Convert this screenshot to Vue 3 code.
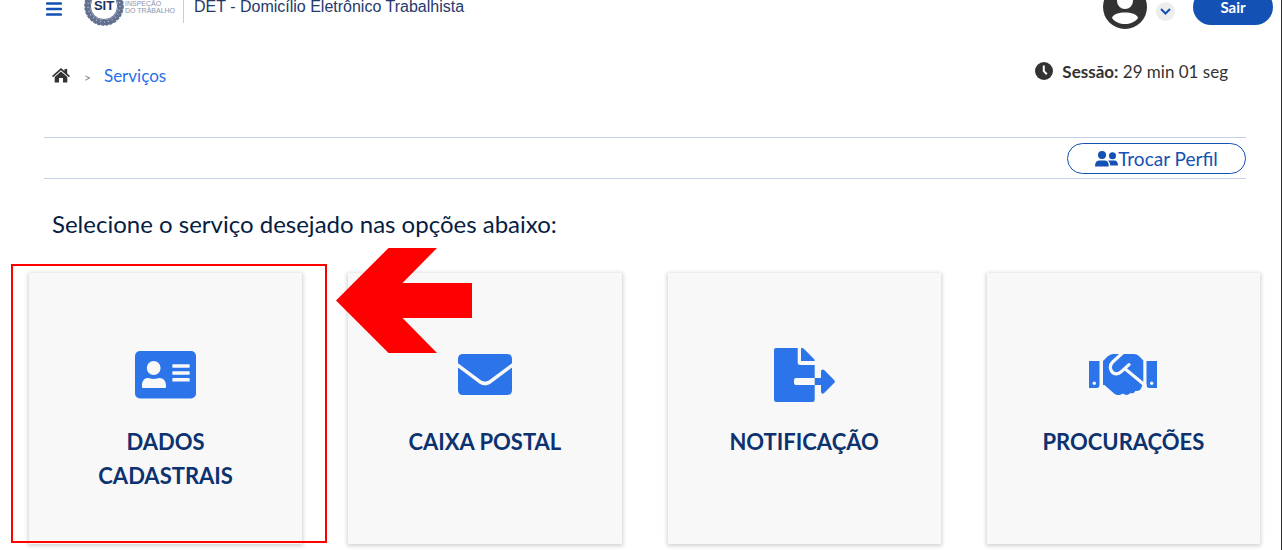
<script setup>
const services = [
  { id: 'dados', title: 'Dados Cadastrais', highlighted: true },
  { id: 'caixa', title: 'Caixa Postal' },
  { id: 'notificacao', title: 'Notificação' },
  { id: 'procuracoes', title: 'Procurações' },
]
</script>

<template>
  <div class="page">
    <header class="topbar">
      <button class="menu" type="button" aria-label="Menu">
        <svg width="16" height="14" viewBox="0 0 16 14">
          <path d="M1 1.500h14M1 7h14M1 12.500h14" stroke="#1351b4" stroke-width="2.500" stroke-linecap="round" />
        </svg>
      </button>
      <a class="brand" href="#">
        <svg class="seal" width="40" height="40" viewBox="0 0 40 40">
          <circle cx="20" cy="20" r="16.500" fill="none" stroke="#62718f" stroke-width="5" />
          <circle cx="20" cy="20" r="19" fill="none" stroke="#62718f" stroke-width="1.600" stroke-dasharray="3 1.200" />
          <circle cx="20" cy="20" r="16" fill="none" stroke="#c3cad6" stroke-width="1.200" stroke-dasharray="1 3" />
          <circle cx="20" cy="20" r="13.600" fill="#fff" stroke="#62718f" stroke-width="1" />
          <text x="20" y="24" text-anchor="middle" class="seal-text">SIT</text>
        </svg>
        <span class="org">INSPEÇÃO<br />DO TRABALHO</span>
      </a>
      <span class="app-name">DET - Domicílio Eletrônico Trabalhista</span>
      <div class="account">
        <svg class="avatar" width="44" height="44" viewBox="0 0 44 44">
          <circle cx="22" cy="22" r="22" fill="#333" />
          <circle cx="22" cy="16" r="8" fill="#fff" />
          <path d="M9 33c1-4 7-5.500 13-5.500s12 1.500 13 5.500c-3 4-8 6-13 6s-10-2-13-6z" fill="#fff" />
        </svg>
        <button class="expand" type="button" aria-label="Abrir menu do usuário">
          <svg width="11" height="7" viewBox="0 0 11 7">
            <path d="M1 1l4.500 4.500L10 1" fill="none" stroke="#1351b4" stroke-width="2" />
          </svg>
        </button>
        <button class="logout" type="button">Sair</button>
      </div>
    </header>

    <div class="subbar">
      <nav class="crumbs" aria-label="Trilha">
        <a href="#" aria-label="Início">
          <svg width="18" height="15" viewBox="0 0 18 15" fill="#333">
            <path d="M9 0L12.500 3.100V1h2.700v4.500L18 8l-1.100 1.300L9 2.300 1.100 9.300 0 8z" />
            <path d="M9 3.600l6.300 5.500V14.500H11V10H7v4.500H2.700V9.100z" />
          </svg>
        </a>
        <span class="sep">&gt;</span>
        <a class="current" href="#">Serviços</a>
      </nav>
      <div class="session">
        <svg width="18" height="18" viewBox="0 0 18 18">
          <circle cx="9" cy="9" r="9" fill="#333" />
          <path d="M8.800 3.500v5.700l3 3" fill="none" stroke="#fff" stroke-width="2" />
        </svg>
        <span><strong>Sessão:</strong> 29 min 01 seg</span>
      </div>
    </div>

    <div class="profile">
      <button class="switch" type="button">
        <svg width="23" height="16" viewBox="0 0 23 16" fill="#1351b4">
          <circle cx="7" cy="4" r="4" />
          <path d="M0 15.500c0-4 1.500-6 4-6h6c2.500 0 3.800 2 3.800 6z" />
          <circle cx="17.500" cy="4.800" r="3.500" />
          <path d="M13 9.500h6.500c2.300 0 3.500 2 3.500 5h-7.800c0-2-.8-3.700-2.200-5z" />
        </svg>
        <span>Trocar Perfil</span>
      </button>
    </div>

    <h1 class="intro">Selecione o serviço desejado nas opções abaixo:</h1>

    <main class="cards">
      <div v-for="s in services" :key="s.id" class="slot">
        <a class="card" href="#">
          <span class="icon">
            <svg v-if="s.id === 'dados'" width="61" height="48" viewBox="0 0 61 48">
              <rect width="61" height="47.500" rx="5" fill="#2c74ea" />
              <g fill="#f8f8f8">
                <circle cx="18.700" cy="17" r="6.900" />
                <path d="M7 34.500c0-5 2.500-7.500 6-7.500 2 0 3 1 5.800 1s3.700-1 5.700-1c4 0 6.500 3 6.500 7.500V36q0 1-1 1H8q-1 0-1-1z" />
                <rect x="37.300" y="13.300" width="17.400" height="3.500" rx="0.700" />
                <rect x="37.300" y="20.200" width="17.400" height="3.500" rx="0.700" />
                <rect x="37.300" y="27.100" width="17.400" height="3.500" rx="0.700" />
              </g>
            </svg>
            <svg v-else-if="s.id === 'caixa'" width="54" height="42" viewBox="0 0 54 42" fill="#2c74ea">
              <path d="M5 0h44q5 0 5 5v4.200L32.500 25.300c-2.500 2-4 2.200-5.500 2.200s-3-.2-5.500-2.200L0 9.200V5q0-5 5-5z" />
              <path d="M0 13.500l20 14.900c3 2.200 5 2.900 7 2.900s4-.7 7-2.900l20-14.900V36q0 5-5 5H5q-5 0-5-5z" />
            </svg>
            <svg v-else-if="s.id === 'notificacao'" width="61" height="54" viewBox="0 0 61 54" fill="#2c74ea">
              <path d="M2 0h21.700v14.500q0 2.500 2.500 2.500h14.500v13H22q-2 0-2 2v3q0 2 2 2h18.700v14.500q0 2.500-2.500 2.500H2.500Q0 54 0 51.500V2q0-2 2-2z" />
              <path d="M27 0h1q1 0 1.800.8l10.200 10.200q.7.700.7 2H27z" />
              <path d="M40.700 30H47v-6.500c0-2.200 1.900-2.700 3.200-1.400L60.300 32.200q1.200 1.300 0 2.600L50.200 45c-1.300 1.300-3.200.8-3.200-1.400V37h-6.300z" />
            </svg>
            <svg v-else width="68" height="42" viewBox="0 0 68 42">
              <g fill="#2c74ea">
                <path d="M0 7h10.500v24q0 3-3 3H0zM57.500 7H68v27h-7.500q-3 0-3-3z" />
                <path d="M14 7l4.500-4.500Q21 0 24 0h21q3 0 5 2l4.300 4.500V28l-2 6c-1.500 3-4 3.500-6 2.700-1 2.800-3.500 3-5 2.300-3.300 3.300-5.500 1.500-7.300.5-3 2-6.500 2.200-9.500-.5L15.500 31H14z" />
              </g>
              <path d="M33.500-1l-9.800 9c-5 5-1 11.800 3.800 11.800 2.300 0 3.500-1 4.800-2.200l7.700-7M36 14.800l20 16.400" fill="none" stroke="#f8f8f8" stroke-width="3.200" stroke-linecap="round" />
              <circle cx="5.300" cy="29.300" r="1.700" fill="#f8f8f8" />
              <circle cx="62.700" cy="29.300" r="1.700" fill="#f8f8f8" />
            </svg>
          </span>
          <span class="title">{{ s.title }}</span>
        </a>
        <template v-if="s.highlighted">
          <div class="frame"></div>
          <svg class="arrow" width="136" height="105" viewBox="0 0 136 105">
            <path d="M0 52.500L52.500 0H101L66.500 35H136v35H66.500L101 105H52.500z" fill="#f00" />
          </svg>
        </template>
      </div>
    </main>
  </div>
</template>

<style>
body {
  margin: 0;
  overflow: hidden;
  background: #fff;
}
</style>

<style scoped>
.page {
  min-height: 100vh;
  box-sizing: border-box;
  border-right: 1px solid #333;
  color: #333;
  font-family: Lato, "Open Sans", sans-serif;
  display: flow-root;
}
button {
  font-family: inherit;
  padding: 0;
  border: 0;
  background: none;
  cursor: pointer;
}
a {
  color: inherit;
  text-decoration: none;
}
svg {
  display: block;
  flex: none;
}
/* The bar sits partly scrolled out of view. */
.topbar {
  display: flex;
  align-items: center;
  height: 44px;
  margin-top: -15px;
  padding: 0 8px 0 46px;
}
.menu {
  padding-top: 4px;
}
.brand {
  display: flex;
  align-items: center;
  margin-left: 22px;
  padding-right: 10px;
  border-right: 1px solid #ccc;
  height: 32px;
}
.seal {
  margin-top: -2px;
}
.seal-text {
  font: bold 13px "Liberation Sans", sans-serif;
  fill: #1c3263;
}
.org {
  width: 48px;
  margin-left: 1px;
  font: 7px/7px "Liberation Sans", sans-serif;
  color: #8a94aa;
  white-space: nowrap;
}
.app-name {
  margin-left: 10px;
  font: 16px/20px "Liberation Sans", sans-serif;
  color: #25396b;
}
.account {
  display: flex;
  align-items: center;
  margin-left: auto;
}
.expand {
  display: grid;
  place-items: center;
  width: 19px;
  height: 19px;
  margin: 8px 18px 0 9px;
  border-radius: 50%;
  background: #ededed;
}
.logout {
  width: 80px;
  height: 36px;
  border-radius: 18px;
  background: #1351b4;
  color: #fff;
  font-size: 15px;
  font-weight: 700;
}
.subbar {
  display: flex;
  justify-content: space-between;
  height: 108px;
  padding: 0 53px 0 52px;
}
.crumbs,
.session {
  display: flex;
  align-items: center;
  height: 24px;
  font-size: 17px;
}
.crumbs {
  margin-top: 34px;
}
.sep {
  margin: 4px 13px 0 14px;
  color: #888;
  font-size: 12px;
}
.current {
  color: #2670e8;
}
.session {
  gap: 9px;
  margin-top: 30px;
}
.profile {
  display: flex;
  justify-content: flex-end;
  margin: 0 35px 0 44px;
  padding: 5px 0 4px;
  border-top: 1px solid #c5d0e8;
  border-bottom: 1px solid #c5d0e8;
}
.switch {
  display: flex;
  align-items: center;
  justify-content: center;
  box-sizing: border-box;
  width: 179px;
  height: 31px;
  border: 1px solid #1351b4;
  border-radius: 16px;
  color: #1351b4;
  font-size: 19px;
}
.intro {
  margin: 29px 52px 33px;
  color: #071d41;
  font-size: 24px;
  font-weight: 400;
  line-height: 32px;
}
.cards {
  display: grid;
  grid-template-columns: repeat(4, 1fr);
  gap: 46px;
  padding: 0 21px 0 29px;
}
.slot {
  position: relative;
}
.card {
  display: flex;
  flex-direction: column;
  align-items: center;
  gap: 23px;
  box-sizing: border-box;
  min-height: 271px;
  padding: 75px 48px 40px;
  background: #f8f8f8;
  box-shadow: 0 1px 4px 1px rgba(0, 0, 0, 0.18);
}
.icon {
  display: grid;
  place-items: center;
  height: 54px;
}
.title {
  color: #0c326f;
  font-size: 22px;
  font-weight: 700;
  line-height: 34px;
  text-align: center;
  text-transform: uppercase;
}
.frame {
  position: absolute;
  z-index: 1;
  inset: -9px -25px 1px -18px;
  border: 2px solid #f00;
  pointer-events: none;
}
.arrow {
  position: absolute;
  z-index: 2;
  top: -25px;
  left: 307px;
  pointer-events: none;
}
</style>
